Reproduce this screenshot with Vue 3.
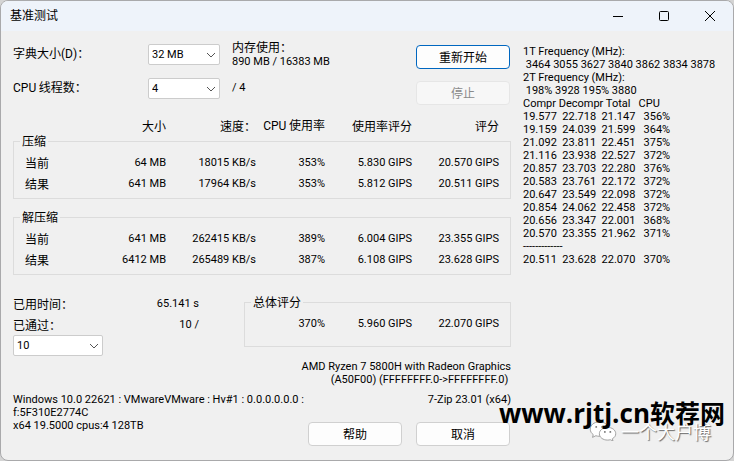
<template>
  <div class="window">
    <header class="titlebar">
      <h1>基准测试</h1>
      <div class="window-buttons">
        <button type="button" aria-label="最小化">
          <svg viewBox="0 0 12 12"><path d="M1 6.5h10" /></svg>
        </button>
        <button type="button" aria-label="最大化">
          <svg viewBox="0 0 12 12"><rect x="1.5" y="1.5" width="9" height="9" rx="1" /></svg>
        </button>
        <button type="button" aria-label="关闭">
          <svg viewBox="0 0 12 12"><path d="M1 1l10 10M11 1L1 11" /></svg>
        </button>
      </div>
    </header>

    <div class="content">
      <main class="main">
        <div class="settings">
          <div class="options">
            <label class="cn" for="dict">字典大小<span class="en">(D)</span>：</label>
            <span class="combo">
              <select id="dict" v-model="dictSize">
                <option>16 MB</option>
                <option>32 MB</option>
                <option>64 MB</option>
              </select>
              <svg viewBox="0 0 10 6"><path d="M1 1l4 4 4-4" /></svg>
            </span>
            <div class="info">
              <div class="cn">内存使用：</div>
              <div>890 MB / 16383 MB</div>
            </div>

            <label class="cn" for="threads"><span class="en">CPU</span> 线程数：</label>
            <span class="combo">
              <select id="threads" v-model="threads">
                <option>1</option>
                <option>2</option>
                <option>4</option>
              </select>
              <svg viewBox="0 0 10 6"><path d="M1 1l4 4 4-4" /></svg>
            </span>
            <div class="info">/ 4</div>
          </div>
          <div class="actions">
            <button type="button" class="btn primary">重新开始</button>
            <button type="button" class="btn" disabled>停止</button>
          </div>
        </div>

        <table class="results head">
          <thead>
            <tr>
              <th class="name"></th>
              <th class="size">大小</th>
              <th class="speed">速度：</th>
              <th class="usage"><span class="en">CPU</span> 使用率</th>
              <th class="rating">使用率评分</th>
              <th class="rating">评分</th>
            </tr>
          </thead>
        </table>

        <fieldset v-for="group in groups" :key="group.title" class="group">
          <legend>{{ group.title }}</legend>
          <table class="results">
            <tbody>
              <tr v-for="row in group.rows" :key="row.name">
                <th class="name">{{ row.name }}</th>
                <td class="size">{{ row.size }}</td>
                <td class="speed">{{ row.speed }}</td>
                <td class="usage">{{ row.usage }}</td>
                <td class="rating">{{ row.ru }}</td>
                <td class="rating">{{ row.rating }}</td>
              </tr>
            </tbody>
          </table>
        </fieldset>

        <div class="summary">
          <div class="progress">
            <div class="progress-row">
              <span class="cn">已用时间：</span><span>65.141 s</span>
            </div>
            <div class="progress-row">
              <label class="cn" for="passes">已通过：</label><span>10 /</span>
            </div>
            <span class="combo passes">
              <select id="passes" v-model="passes">
                <option>1</option>
                <option>10</option>
                <option>100</option>
              </select>
              <svg viewBox="0 0 10 6"><path d="M1 1l4 4 4-4" /></svg>
            </span>
          </div>
          <fieldset class="group total">
            <legend>总体评分</legend>
            <table class="results">
              <tbody>
                <tr>
                  <td class="usage">370%</td>
                  <td class="rating">5.960 GIPS</td>
                  <td class="rating">22.070 GIPS</td>
                </tr>
              </tbody>
            </table>
          </fieldset>
        </div>

        <div class="cpu">
          <div>AMD Ryzen 7 5800H with Radeon Graphics</div>
          <div>(A50F00) (FFFFFFFF.0-&gt;FFFFFFFF.0)&nbsp;</div>
        </div>
        <div class="system">
          <div class="system-text">
            Windows 10.0 22621 : VMwareVMware : Hv#1 : 0.0.0.0.0.0 :<br />
            f:5F310E2774C<br />
            x64 19.5000 cpus:4 128TB
          </div>
          <div>7-Zip 23.01 (x64)</div>
        </div>

        <footer class="footer">
          <button type="button" class="btn">帮助</button>
          <button type="button" class="btn">取消</button>
        </footer>
      </main>

      <pre class="log">{{ log }}</pre>
    </div>

    <div class="wechat">
      <svg viewBox="0 0 30 22">
        <path d="M11 1C5 1 1 4.500 1 9c0 2.500 1.300 4.600 3.300 6L3.500 18l3.600-1.800c1.200.4 2.600.6 3.900.6C17 16.800 21 13.500 21 9S17 1 11 1z" />
        <path d="M20 7c-5 0-9 3-9 7s4 7 9 7c1 0 2.100-.1 3-.4l3 1.400-.7-2.500C27.700 18.200 29 16.300 29 14c0-4-4-7-9-7z" />
        <path class="eyes" d="M7.500 6.500h.1M14 6.500h.1M17 12h.1M23 12h.1" />
      </svg>
      <span>一个大户博</span>
    </div>
    <div class="site"><span class="domain">www.rjtj.cn</span>软荐网</div>
  </div>
</template>

<script setup>
import { ref } from 'vue';

const dictSize = ref('32 MB');
const threads = ref('4');
const passes = ref('10');

const groups = [
  {
    title: '压缩',
    rows: [
      { name: '当前', size: '64 MB', speed: '18015 KB/s', usage: '353%', ru: '5.830 GIPS', rating: '20.570 GIPS' },
      { name: '结果', size: '641 MB', speed: '17964 KB/s', usage: '353%', ru: '5.812 GIPS', rating: '20.511 GIPS' },
    ],
  },
  {
    title: '解压缩',
    rows: [
      { name: '当前', size: '641 MB', speed: '262415 KB/s', usage: '389%', ru: '6.004 GIPS', rating: '23.355 GIPS' },
      { name: '结果', size: '6412 MB', speed: '265489 KB/s', usage: '387%', ru: '6.108 GIPS', rating: '23.628 GIPS' },
    ],
  },
];

const log = [
  '1T Frequency (MHz):',
  ' 3464 3055 3627 3840 3862 3834 3878',
  '2T Frequency (MHz):',
  ' 198% 3928 195% 3880',
  'Compr Decompr Total   CPU',
  '19.577  22.718  21.147   356%',
  '19.159  24.039  21.599   364%',
  '21.092  23.811  22.451   375%',
  '21.116  23.938  22.527   372%',
  '20.857  23.703  22.280   376%',
  '20.583  23.761  22.172   372%',
  '20.647  23.549  22.098   372%',
  '20.854  24.062  22.458   372%',
  '20.656  23.347  22.001   368%',
  '20.570  23.355  21.962   371%',
  '-------------',
  '20.511  23.628  22.070   370%',
].join('\n');
</script>

<style>
body {
  background: #d4d4d4;
}
</style>

<style scoped>
.window {
  position: relative;
  box-sizing: border-box;
  min-height: 100vh;
  border: 1px solid #a9a9ab;
  border-radius: 8px;
  overflow: hidden;
  background: #f0f0f0;
  color: #000;
  font: 11px/13px Roboto, "Noto Sans CJK SC", sans-serif;
}

/* Title bar */
.titlebar {
  display: flex;
  justify-content: space-between;
  height: 30px;
  padding-left: 9px;
  background: #eef3fa;
}

h1 {
  margin: 0;
  font: 12px/28px "Noto Sans CJK SC", sans-serif;
}

.window-buttons {
  display: flex;
}

.window-buttons button {
  width: 46px;
  padding: 0;
  border: 0;
  background: none;
  line-height: 0;
}

.window-buttons svg {
  width: 12px;
  height: 12px;
  fill: none;
  stroke: #000;
}

.content {
  display: grid;
  grid-template-columns: minmax(0, 1fr) 200px;
  gap: 12px;
  padding: 6px 10px 14px 12px;
}

.cn {
  font: 12px/16px "Noto Sans CJK SC", sans-serif;
}

.en {
  font-family: Roboto, sans-serif;
}

/* Settings */
.settings {
  display: flex;
  justify-content: space-between;
}

.options {
  display: grid;
  grid-template-columns: 135px 72px auto;
  grid-template-rows: 34px 34px;
  align-items: center;
}

.options label {
  padding-bottom: 2px;
}

.info {
  padding: 0 0 1px 12px;
}

.combo {
  position: relative;
  display: block;
}

.combo select {
  display: block;
  appearance: none;
  box-sizing: border-box;
  width: 100%;
  height: 21px;
  padding: 0 20px 0 3px;
  border: 1px solid #ccc;
  border-radius: 2px;
  background: #fff;
  color: #000;
  font: inherit;
}

.combo svg {
  position: absolute;
  top: 8px;
  right: 4px;
  width: 10px;
  height: 6px;
  fill: none;
  stroke: #555;
  pointer-events: none;
}

.actions {
  display: flex;
  flex-direction: column;
  gap: 12px;
  padding: 8px 1px 0 0;
}

.btn {
  box-sizing: border-box;
  width: 94px;
  height: 24px;
  padding: 0;
  border: 1px solid #d0d0d0;
  border-radius: 4px;
  background: #fdfdfd;
  color: #000;
  font: 12px/16px "Noto Sans CJK SC", sans-serif;
}

.btn.primary {
  border-color: #0067c0;
}

.btn:disabled {
  border-color: #e6e6e6;
  background: #f7f7f7;
  color: #8a8a8a;
}

/* Result tables */
.results {
  width: 100%;
  table-layout: fixed;
  border-collapse: collapse;
}

.results th,
.results td {
  height: 21px;
  padding: 0;
  text-align: right;
  white-space: nowrap;
}

.results th {
  font: 12px/16px "Noto Sans CJK SC", sans-serif;
}

.results .name {
  text-align: left;
}

.size {
  width: 91px;
}

.speed {
  width: 90px;
}

.usage {
  width: 69px;
}

.rating {
  width: 87px;
}

.head {
  width: calc(100% - 12px);
  margin-top: 10px;
}

.group {
  min-width: 0;
  margin: 0 0 9px;
  padding: 2px 11px 4px;
  border: 1px solid #dcdcdc;
}

.head + .group {
  margin-top: -4px;
}

.group legend {
  margin-left: -5px;
  padding: 0 2px;
  font: 12px/18px "Noto Sans CJK SC", sans-serif;
}

/* Elapsed time and total rating */
.summary {
  display: flex;
  justify-content: space-between;
  align-items: flex-start;
  margin-top: 18px;
}

.progress {
  width: 186px;
}

.progress-row {
  display: flex;
  justify-content: space-between;
  align-items: center;
  height: 21px;
}

.passes {
  width: 90px;
}

.total {
  width: 243px;
  margin: 0;
  padding-bottom: 12px;
}

.cpu {
  margin-top: 4px;
  text-align: right;
}

.system {
  display: flex;
  justify-content: space-between;
  margin-top: 7px;
}

/* the buttons share their top edge with the last system line */
.footer {
  display: flex;
  justify-content: flex-end;
  gap: 14px;
  margin-top: -10px;
  padding-right: 1px;
}

.log {
  margin: 8px 0 0;
  font: inherit;
}

/* Watermarks over the window */
.wechat {
  position: absolute;
  right: 22px;
  bottom: 17px;
  display: flex;
  align-items: center;
  gap: 4px;
  color: #fff;
  font: 18px/24px "Noto Sans CJK SC", sans-serif;
  text-shadow: 1px 1px 1px #666;
}

.wechat svg {
  width: 28px;
  height: 20px;
  fill: #fff;
  stroke: #999;
}

.wechat .eyes {
  stroke: #777;
  stroke-width: 2;
  stroke-linecap: round;
}

.site {
  position: absolute;
  right: 8px;
  bottom: 31px;
  font: bold 25px/32px "Noto Sans CJK SC", sans-serif;
}

.domain {
  font-family: "Open Sans", "Noto Sans", sans-serif;
  font-size: 26px;
}
</style>
